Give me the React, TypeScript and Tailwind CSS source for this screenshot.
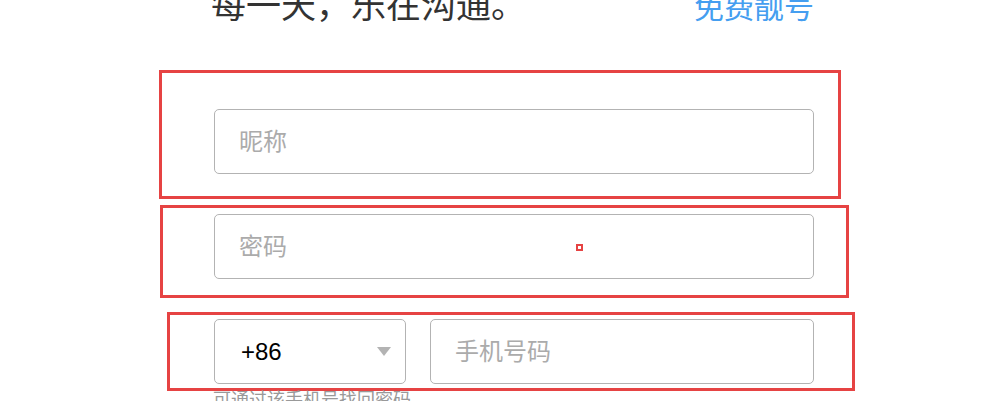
import { useState } from 'react'

const font = "font-['Liberation_Sans','Noto_Sans_CJK_SC',sans-serif]"

function TextField({ placeholder, className = '' }: { placeholder: string; className?: string }) {
  const [value, setValue] = useState('')
  return (
    <input
      value={value}
      onChange={(e) => setValue(e.target.value)}
      placeholder={placeholder}
      className={`h-[65px] rounded-[5px] border border-[#b3b3b3] bg-white px-[24px] text-[24px] text-black outline-none placeholder:text-[#ababab] ${className}`}
    />
  )
}

function CountrySelect() {
  return (
    <div className="flex h-[65px] w-[192px] shrink-0 items-center justify-between rounded-[5px] border border-[#b3b3b3] bg-white pl-[26px] pr-[14px]">
      <span className="text-[24px] leading-none text-black">+86</span>
      <svg width="14" height="9" viewBox="0 0 14 9" aria-hidden="true">
        <path d="M0 0h14L7 9z" fill="#b3b3b3" />
      </svg>
    </div>
  )
}

export default function App() {
  return (
    <div className={`min-h-[401px] w-[1001px] overflow-hidden bg-white ${font}`}>
      <div className="ml-[211px] flex h-[70px] w-[603px] items-start justify-between">
        <h1 className="-mt-[12px] text-[35px] font-normal leading-[35px] text-[#333]">
          每一天，乐在沟通。
        </h1>
        <a href="#" className="-mt-[7px] text-[30px] leading-[30px] text-[#459ef0]">
          免费靓号
        </a>
      </div>

      <div className="ml-[159px] w-[682px] border-[3px] border-[#e64343] pb-[22px] pl-[52px] pr-[24px] pt-[36px]">
        <TextField placeholder="昵称" className="w-[600px]" />
      </div>

      <div className="relative ml-[160px] mt-[6px] w-[689px] border-[3px] border-[#e64343] pb-[16px] pl-[51px] pr-[32px] pt-[6px]">
        <TextField placeholder="密码" className="w-[600px]" />
        <span className="absolute left-[413px] top-[36px] h-[7px] w-[7px] border-2 border-[#e64343] bg-white" />
      </div>

      <div className="ml-[167px] mt-[14px] w-[688px] border-[3px] border-[#e64343] pb-[4px] pl-[44px] pr-[38px] pt-[4px]">
        <div className="flex w-[600px] gap-[24px]">
          <CountrySelect />
          <TextField placeholder="手机号码" className="min-w-0 flex-1" />
        </div>
      </div>

      <p className="ml-[213px] text-[18px] leading-[18px] text-[#999]">可通过该手机号找回密码</p>
    </div>
  )
}
